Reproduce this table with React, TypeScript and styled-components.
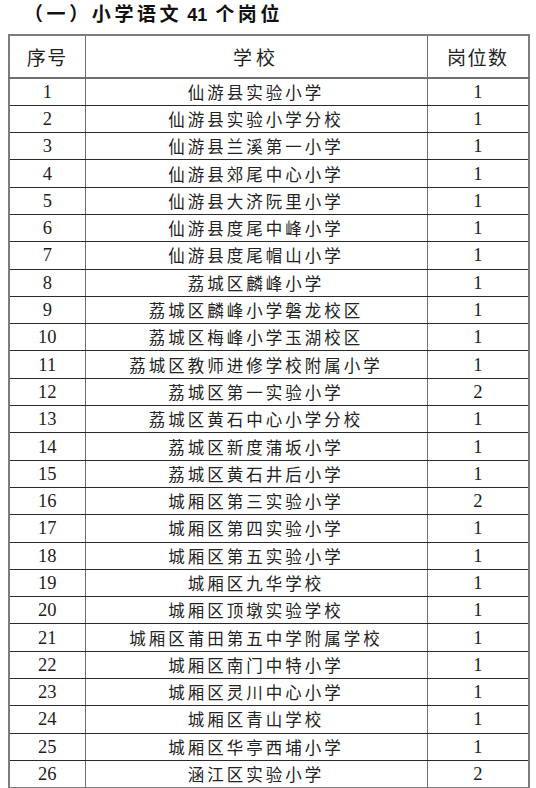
import React from "react"
import styled, { createGlobalStyle } from "styled-components"

const schools: [string, number][] = [
	["仙游县实验小学", 1],
	["仙游县实验小学分校", 1],
	["仙游县兰溪第一小学", 1],
	["仙游县郊尾中心小学", 1],
	["仙游县大济阮里小学", 1],
	["仙游县度尾中峰小学", 1],
	["仙游县度尾帽山小学", 1],
	["荔城区麟峰小学", 1],
	["荔城区麟峰小学磐龙校区", 1],
	["荔城区梅峰小学玉湖校区", 1],
	["荔城区教师进修学校附属小学", 1],
	["荔城区第一实验小学", 2],
	["荔城区黄石中心小学分校", 1],
	["荔城区新度蒲坂小学", 1],
	["荔城区黄石井后小学", 1],
	["城厢区第三实验小学", 2],
	["城厢区第四实验小学", 1],
	["城厢区第五实验小学", 1],
	["城厢区九华学校", 1],
	["城厢区顶墩实验学校", 1],
	["城厢区莆田第五中学附属学校", 1],
	["城厢区南门中特小学", 1],
	["城厢区灵川中心小学", 1],
	["城厢区青山学校", 1],
	["城厢区华亭西埔小学", 1],
	["涵江区实验小学", 2],
]

const GlobalStyle = createGlobalStyle`
	html, body {
		margin: 0;
		padding: 0;
		background: #ffffff;
		overflow: hidden;
	}
`

const Page = styled.div`
	width: 536px;
	height: 788px;
	overflow: hidden;
	background: #ffffff;
	color: #1c1c1c;
`

const Title = styled.h2`
	margin: 0;
	height: 34px;
	padding: 0 0 0 24px;
	box-sizing: border-box;
	font-family: "Noto Sans CJK SC", sans-serif;
	font-size: 19px;
	font-weight: 700;
	letter-spacing: 3.6px;
	line-height: 25px;
	color: #111111;
	white-space: nowrap;
`

const TitleNumber = styled.span`
	font-family: "Liberation Sans", Arial, sans-serif;
	font-size: 18px;
	font-weight: 700;
	letter-spacing: 0;
	margin: 0 8px 0 5px;
`

const Table = styled.table`
	margin-left: 8px;
	width: 520px;
	border-collapse: collapse;
	table-layout: fixed;
	border: 2px solid #7d7d7d;
`

interface ColProps {
	width: number
}

const Col = styled.col<ColProps>`
	width: ${({ width }) => width}px;
`

const HeadRow = styled.tr`
	height: 43px;
`

const HeadCell = styled.th<{ spacing?: number }>`
	padding: 0;
	border: 1px solid #6f6f6f;
	border-bottom: 2px solid #6f6f6f;
	font-family: "Noto Sans CJK SC", sans-serif;
	font-size: 19px;
	font-weight: 400;
	letter-spacing: ${({ spacing }) => spacing ?? 1.5}px;
	text-align: center;
	vertical-align: middle;
	color: #222222;
`

const Row = styled.tr`
	height: 27.3px;
`

const NumCell = styled.td`
	padding: 0;
	border: 1px solid #2a2a2a;
	border-right-color: #6f6f6f;
	font-family: "Liberation Serif", "Times New Roman", serif;
	font-size: 18.5px;
	line-height: 20px;
	text-align: center;
	vertical-align: middle;
	color: #1c1c1c;
`

const NameCell = styled.td`
	padding: 0;
	border: 1px solid #2a2a2a;
	border-left-color: #6f6f6f;
	border-right-color: #6f6f6f;
	font-family: "Noto Sans CJK SC", sans-serif;
	font-size: 16.5px;
	line-height: 20px;
	letter-spacing: 3px;
	text-align: center;
	vertical-align: middle;
	white-space: nowrap;
	color: #222222;
`

export default function App() {
	return (
		<Page>
			<GlobalStyle />
			<Title>
				（一）小学语文<TitleNumber>41</TitleNumber>个岗位
			</Title>
			<Table>
				<colgroup>
					<Col width={76} />
					<Col width={342} />
					<Col width={102} />
				</colgroup>
				<thead>
					<HeadRow>
						<HeadCell>序号</HeadCell>
						<HeadCell spacing={4}>学校</HeadCell>
						<HeadCell>岗位数</HeadCell>
					</HeadRow>
				</thead>
				<tbody>
					{schools.map(([name, count], i) => (
						<Row key={name}>
							<NumCell>{i + 1}</NumCell>
							<NameCell>{name}</NameCell>
							<NumCell>{count}</NumCell>
						</Row>
					))}
				</tbody>
			</Table>
		</Page>
	)
}
